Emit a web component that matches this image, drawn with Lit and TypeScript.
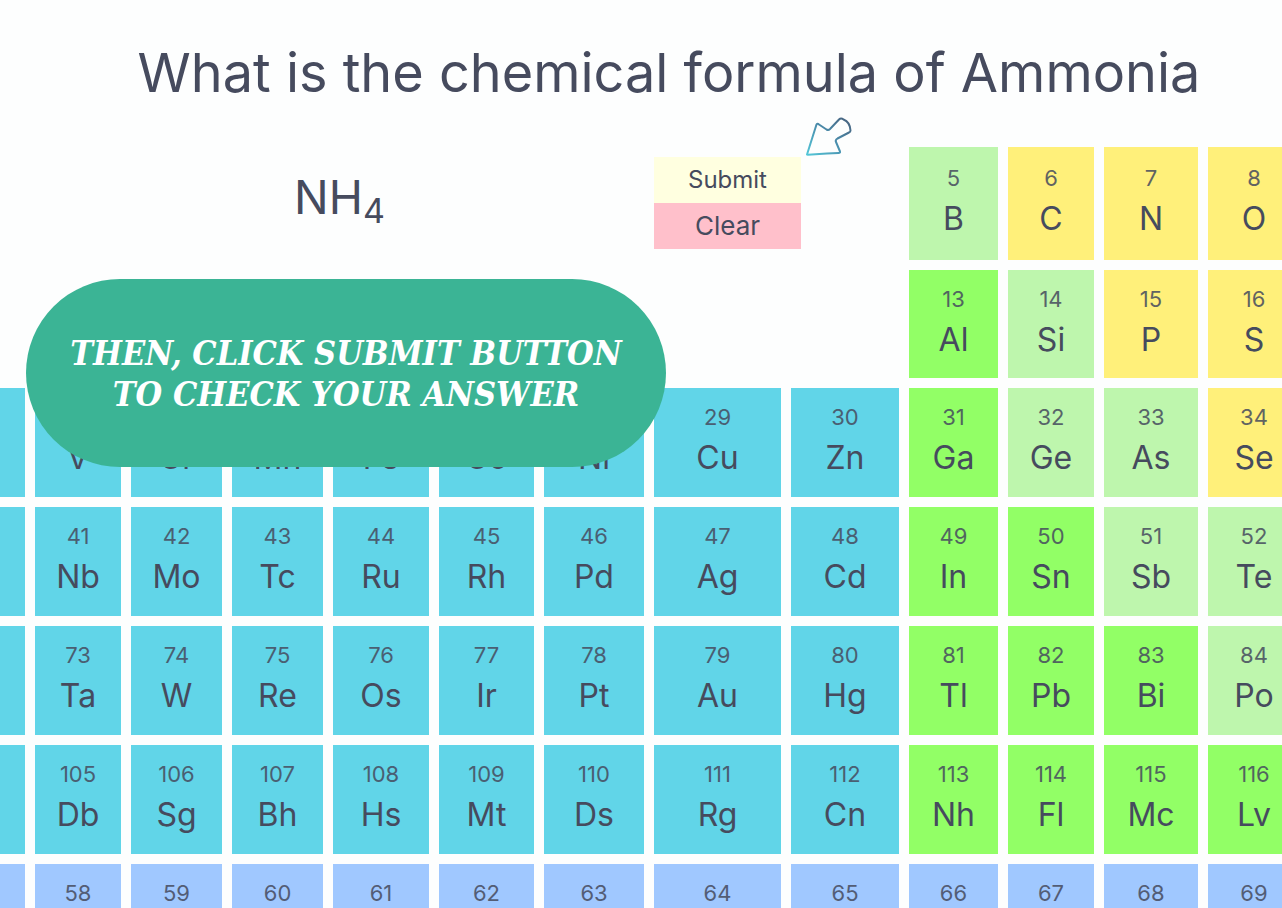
import { LitElement, html, css } from "lit";
import { customElement, state } from "lit/decorators.js";
import { classMap } from "lit/directives/class-map.js";

type Kind = "metal" | "post" | "semi" | "nonmetal" | "lanthanide";

interface Cell {
  num: number;
  symbol: string;
  kind: Kind;
  first?: boolean;
}

const row = (start: number, symbols: string, kinds: string): Cell[] => {
  const names: Record<string, Kind> = {
    m: "metal",
    p: "post",
    s: "semi",
    n: "nonmetal",
    l: "lanthanide",
  };
  return symbols.split(" ").map((symbol, i) => ({
    num: start + i,
    symbol,
    kind: names[kinds[i]],
  }));
};

const cells: Cell[] = [
  ...row(5, "B C N O", "snnn"),
  ...row(13, "Al Si P S", "psnn").map((c, i) => ({ ...c, first: i === 0 })),
  ...row(22, "Ti V Cr Mn Fe Co Ni Cu Zn Ga Ge As Se", "mmmmmmmmmpssn"),
  ...row(40, "Zr Nb Mo Tc Ru Rh Pd Ag Cd In Sn Sb Te", "mmmmmmmmmppss"),
  ...row(72, "Hf Ta W Re Os Ir Pt Au Hg Tl Pb Bi Po", "mmmmmmmmmppps"),
  ...row(104, "Rf Db Sg Bh Hs Mt Ds Rg Cn Nh Fl Mc Lv", "mmmmmmmmmpppp"),
  ...row(57, "La Ce Pr Nd Pm Sm Eu Gd Tb Dy Ho Er Tm", "lllllllllllll"),
];

@customElement("app-root")
export class AppRoot extends LitElement {
  @state() private formula: { symbol: string; count?: number }[] = [
    { symbol: "N" },
    { symbol: "H", count: 4 },
  ];

  static styles = css`
    :host {
      display: block;
      position: relative;
      height: 100vh;
      overflow: hidden;
      background: #fdfefe;
      color: #464b5e;
      font-family: Inter, "Open Sans", sans-serif;
    }
    h1 {
      margin: 0;
      padding: 37px 0 38px 56px;
      font-size: 54px;
      line-height: 72px;
      font-weight: 400;
      text-align: center;
      white-space: nowrap;
    }
    button {
      margin: 0;
      border: 0;
      color: inherit;
      font: inherit;
      cursor: pointer;
    }
    .table {
      display: grid;
      grid-template-columns: 88fr 86fr 91fr 91fr 96fr 95fr 100fr 127fr 108fr 89fr 86fr 94fr 92fr;
      grid-template-rows: 113px 108px;
      gap: 10px;
      margin: 0 -18px 0 -63px;
    }
    .answer {
      grid-column: 2 / 8;
      display: block;
      padding-top: 14px;
      font-size: 46px;
      line-height: 72px;
      text-align: center;
    }
    .answer sub {
      font-size: 34px;
      line-height: 0;
      vertical-align: -9px;
    }
    .controls {
      grid-column: 8 / 10;
      justify-self: start;
      align-self: start;
      position: relative;
      display: grid;
      width: 147px;
      padding-top: 10px;
    }
    .submit,
    .clear {
      padding: 8px 0;
      line-height: 30px;
    }
    .submit {
      background: #ffffe0;
      font-size: 24px;
    }
    .clear {
      background: #ffc0cb;
      font-size: 26px;
    }
    .pointer {
      position: absolute;
      left: 151px;
      top: -31px;
      width: 48px;
      height: 42px;
      pointer-events: none;
    }
    .cell {
      display: flex;
      flex-direction: column;
      align-items: center;
      justify-content: center;
      min-width: 0;
      padding: 13px 0 14px;
      overflow: hidden;
    }
    .first {
      grid-column-start: 10;
    }
    .num {
      font-size: 22px;
      line-height: 32px;
      opacity: 0.85;
    }
    .symbol {
      font-size: 32px;
      line-height: 50px;
    }
    .metal {
      background: #61d5e8;
    }
    .post {
      background: #92ff66;
    }
    .semi {
      background: #bef6ad;
    }
    .nonmetal {
      background: #fff07a;
    }
    .lanthanide {
      background: #a0c8ff;
    }
    .hint {
      position: absolute;
      left: 26px;
      top: 279px;
      width: 640px;
      box-sizing: border-box;
      margin: 0;
      padding: 54px 0 52px;
      border-radius: 94px;
      background: #3bb495;
      color: #ffffff;
      font: italic 700 34px / 41px "DejaVu Serif Condensed", "DejaVu Serif", serif;
      text-align: center;
      white-space: nowrap;
    }
  `;

  render() {
    return html`
      <h1>What is the chemical formula of Ammonia</h1>
      <main class="table">
        <output class="answer" aria-label="Your answer"
          >${this.formula.map(
            (part) => html`${part.symbol}${part.count ? html`<sub>${part.count}</sub>` : ""}`
          )}</output
        >
        <div class="controls">
          <button class="submit" type="button">Submit</button>
          <button class="clear" type="button" @click=${() => (this.formula = [])}>Clear</button>
          <svg class="pointer" viewBox="0 0 48 42" aria-hidden="true">
            <defs>
              <linearGradient id="shade" x1="0" y1="1" x2="1" y2="0">
                <stop offset="0" stop-color="#53c7d8" />
                <stop offset="0.5" stop-color="#4a8ead" />
                <stop offset="1" stop-color="#48607c" />
              </linearGradient>
            </defs>
            <path
              d="M2 38.5 L11.5 8.5 Q12.5 7 14 8.5 L21.5 13.5 Q23.5 14.5 25 13 L34 3.5 Q36 1.5 38.5 3.5 Q45 6 45.5 14.5 Q45.5 16 44 16.5 L32.5 22.5 Q30 24 31 26 L35 35.5 Q35.5 37 33.5 37 L22 37.5 L3 38.8 Z"
              fill="none"
              stroke="url(#shade)"
              stroke-width="2"
              stroke-linejoin="round"
            />
          </svg>
        </div>
        ${cells.map(
          (c) => html`<button
            type="button"
            class=${classMap({ cell: true, [c.kind]: true, first: !!c.first })}
            @click=${() => (this.formula = [...this.formula, { symbol: c.symbol }])}
          >
            <span class="num">${c.num}</span>
            <span class="symbol">${c.symbol}</span>
          </button>`
        )}
      </main>
      <p class="hint">THEN, CLICK SUBMIT BUTTON<br />TO CHECK YOUR ANSWER</p>
    `;
  }
}
